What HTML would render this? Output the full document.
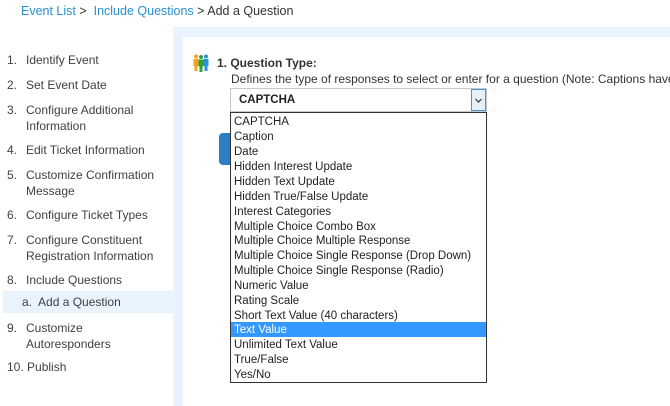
<!DOCTYPE html>
<html><head><style>
*{margin:0;padding:0;box-sizing:border-box}
body{width:670px;height:406px;background:#fff;font-family:"Liberation Sans",sans-serif;font-size:12px;color:#3a3a3a;position:relative;overflow:hidden}
.a{position:absolute;white-space:nowrap}
.bc{left:21px;top:4px;font-size:12.5px;color:#333}
.bc span{color:#2a8fd0}
.strip{left:173px;top:27px;width:497px;height:379px;background:#e8f3fd}
.inner{left:183px;top:37px;width:487px;height:369px;background:#fff}
.nav{left:7px;color:#404040;font-size:12px;line-height:16px}
.nav b{font-weight:normal;display:inline-block;width:19px}
.hl{left:3px;top:291px;width:170px;height:22px;background:#e8f3fd}
.sel{left:230px;top:88px;width:257px;height:24px;border:1px solid #c8c8c8;background:#fff}
.arr{left:471px;top:89px;width:15px;height:22px;border:1px solid #4a90d8;background:#e6f0fb}
.list{left:230px;top:112px;width:257px;height:271px;border:1px solid #333;background:#fff}
.it{position:absolute;left:3px;font-size:11.5px;color:#222;line-height:15px}
.btn{left:219px;top:133px;width:12px;height:32px;background:#2a7fc6;border-radius:4px 0 0 4px}
</style></head><body>
<div class="a bc"><span>Event List</span> &gt;&nbsp; <span>Include Questions</span> &gt; Add a Question</div>
<div class="a strip"></div>
<div class="a inner"></div>
<div class="a hl"></div>
<div class="a nav" style="top:52px"><b>1.</b>Identify Event</div>
<div class="a nav" style="top:77px"><b>2.</b>Set Event Date</div>
<div class="a nav" style="top:102px"><b>3.</b>Configure Additional<br><b></b>Information</div>
<div class="a nav" style="top:142px"><b>4.</b>Edit Ticket Information</div>
<div class="a nav" style="top:167px"><b>5.</b>Customize Confirmation<br><b></b>Message</div>
<div class="a nav" style="top:207px"><b>6.</b>Configure Ticket Types</div>
<div class="a nav" style="top:232px"><b>7.</b>Configure Constituent<br><b></b>Registration Information</div>
<div class="a nav" style="top:272px"><b>8.</b>Include Questions</div>
<div class="a nav" style="top:294px;left:22px">a.&nbsp; Add a Question</div>
<div class="a nav" style="top:320px"><b>9.</b>Customize<br><b></b>Autoresponders</div>
<div class="a nav" style="top:359px">10. Publish</div>
<svg class="a" style="left:193px;top:54px" width="16" height="18" viewBox="0 0 16 18">
<circle cx="3" cy="2.5" r="2" fill="#f7a21b"/><rect x="0.5" y="5" width="5" height="7" fill="#f7a21b"/><rect x="1.5" y="11" width="3" height="6" fill="#f7a21b"/>
<circle cx="13" cy="2.5" r="2" fill="#2f8fd8"/><rect x="10.5" y="5" width="5" height="7" fill="#2f8fd8"/><rect x="11.5" y="11" width="3" height="6" fill="#2f8fd8"/>
<circle cx="8" cy="3" r="2" fill="#2aa53a"/><rect x="5.5" y="5.5" width="5" height="7" fill="#2aa53a"/><rect x="6.5" y="12" width="3" height="6" fill="#2aa53a"/>
</svg>
<div class="a" style="left:217px;top:56px;font-weight:bold;color:#333">1. Question Type:</div>
<div class="a" style="left:231px;top:72px;color:#333">Defines the type of responses to select or enter for a question (Note: Captions have</div>
<div class="a btn"></div>
<div class="a sel"><span style="position:absolute;left:8px;top:5px;font-weight:bold;font-size:11.5px;color:#222">CAPTCHA</span></div>
<div class="a arr"><svg width="13" height="20" viewBox="0 0 13 20"><path d="M3.5 9l3 3 3-3" stroke="#333" fill="none" stroke-width="1.2"/></svg></div>
<div class="a list">
<div style="position:absolute;left:0;top:209px;width:255px;height:15px;background:#3399ff"></div>
<div class="it" style="top:2px">CAPTCHA</div>
<div class="it" style="top:17px">Caption</div>
<div class="it" style="top:32px">Date</div>
<div class="it" style="top:47px">Hidden Interest Update</div>
<div class="it" style="top:62px">Hidden Text Update</div>
<div class="it" style="top:77px">Hidden True/False Update</div>
<div class="it" style="top:92px">Interest Categories</div>
<div class="it" style="top:107px">Multiple Choice Combo Box</div>
<div class="it" style="top:121px">Multiple Choice Multiple Response</div>
<div class="it" style="top:136px">Multiple Choice Single Response (Drop Down)</div>
<div class="it" style="top:151px">Multiple Choice Single Response (Radio)</div>
<div class="it" style="top:166px">Numeric Value</div>
<div class="it" style="top:181px">Rating Scale</div>
<div class="it" style="top:196px">Short Text Value (40 characters)</div>
<div class="it" style="top:210px;color:#fff">Text Value</div>
<div class="it" style="top:225px">Unlimited Text Value</div>
<div class="it" style="top:240px">True/False</div>
<div class="it" style="top:255px">Yes/No</div>
</div>
</body></html>
